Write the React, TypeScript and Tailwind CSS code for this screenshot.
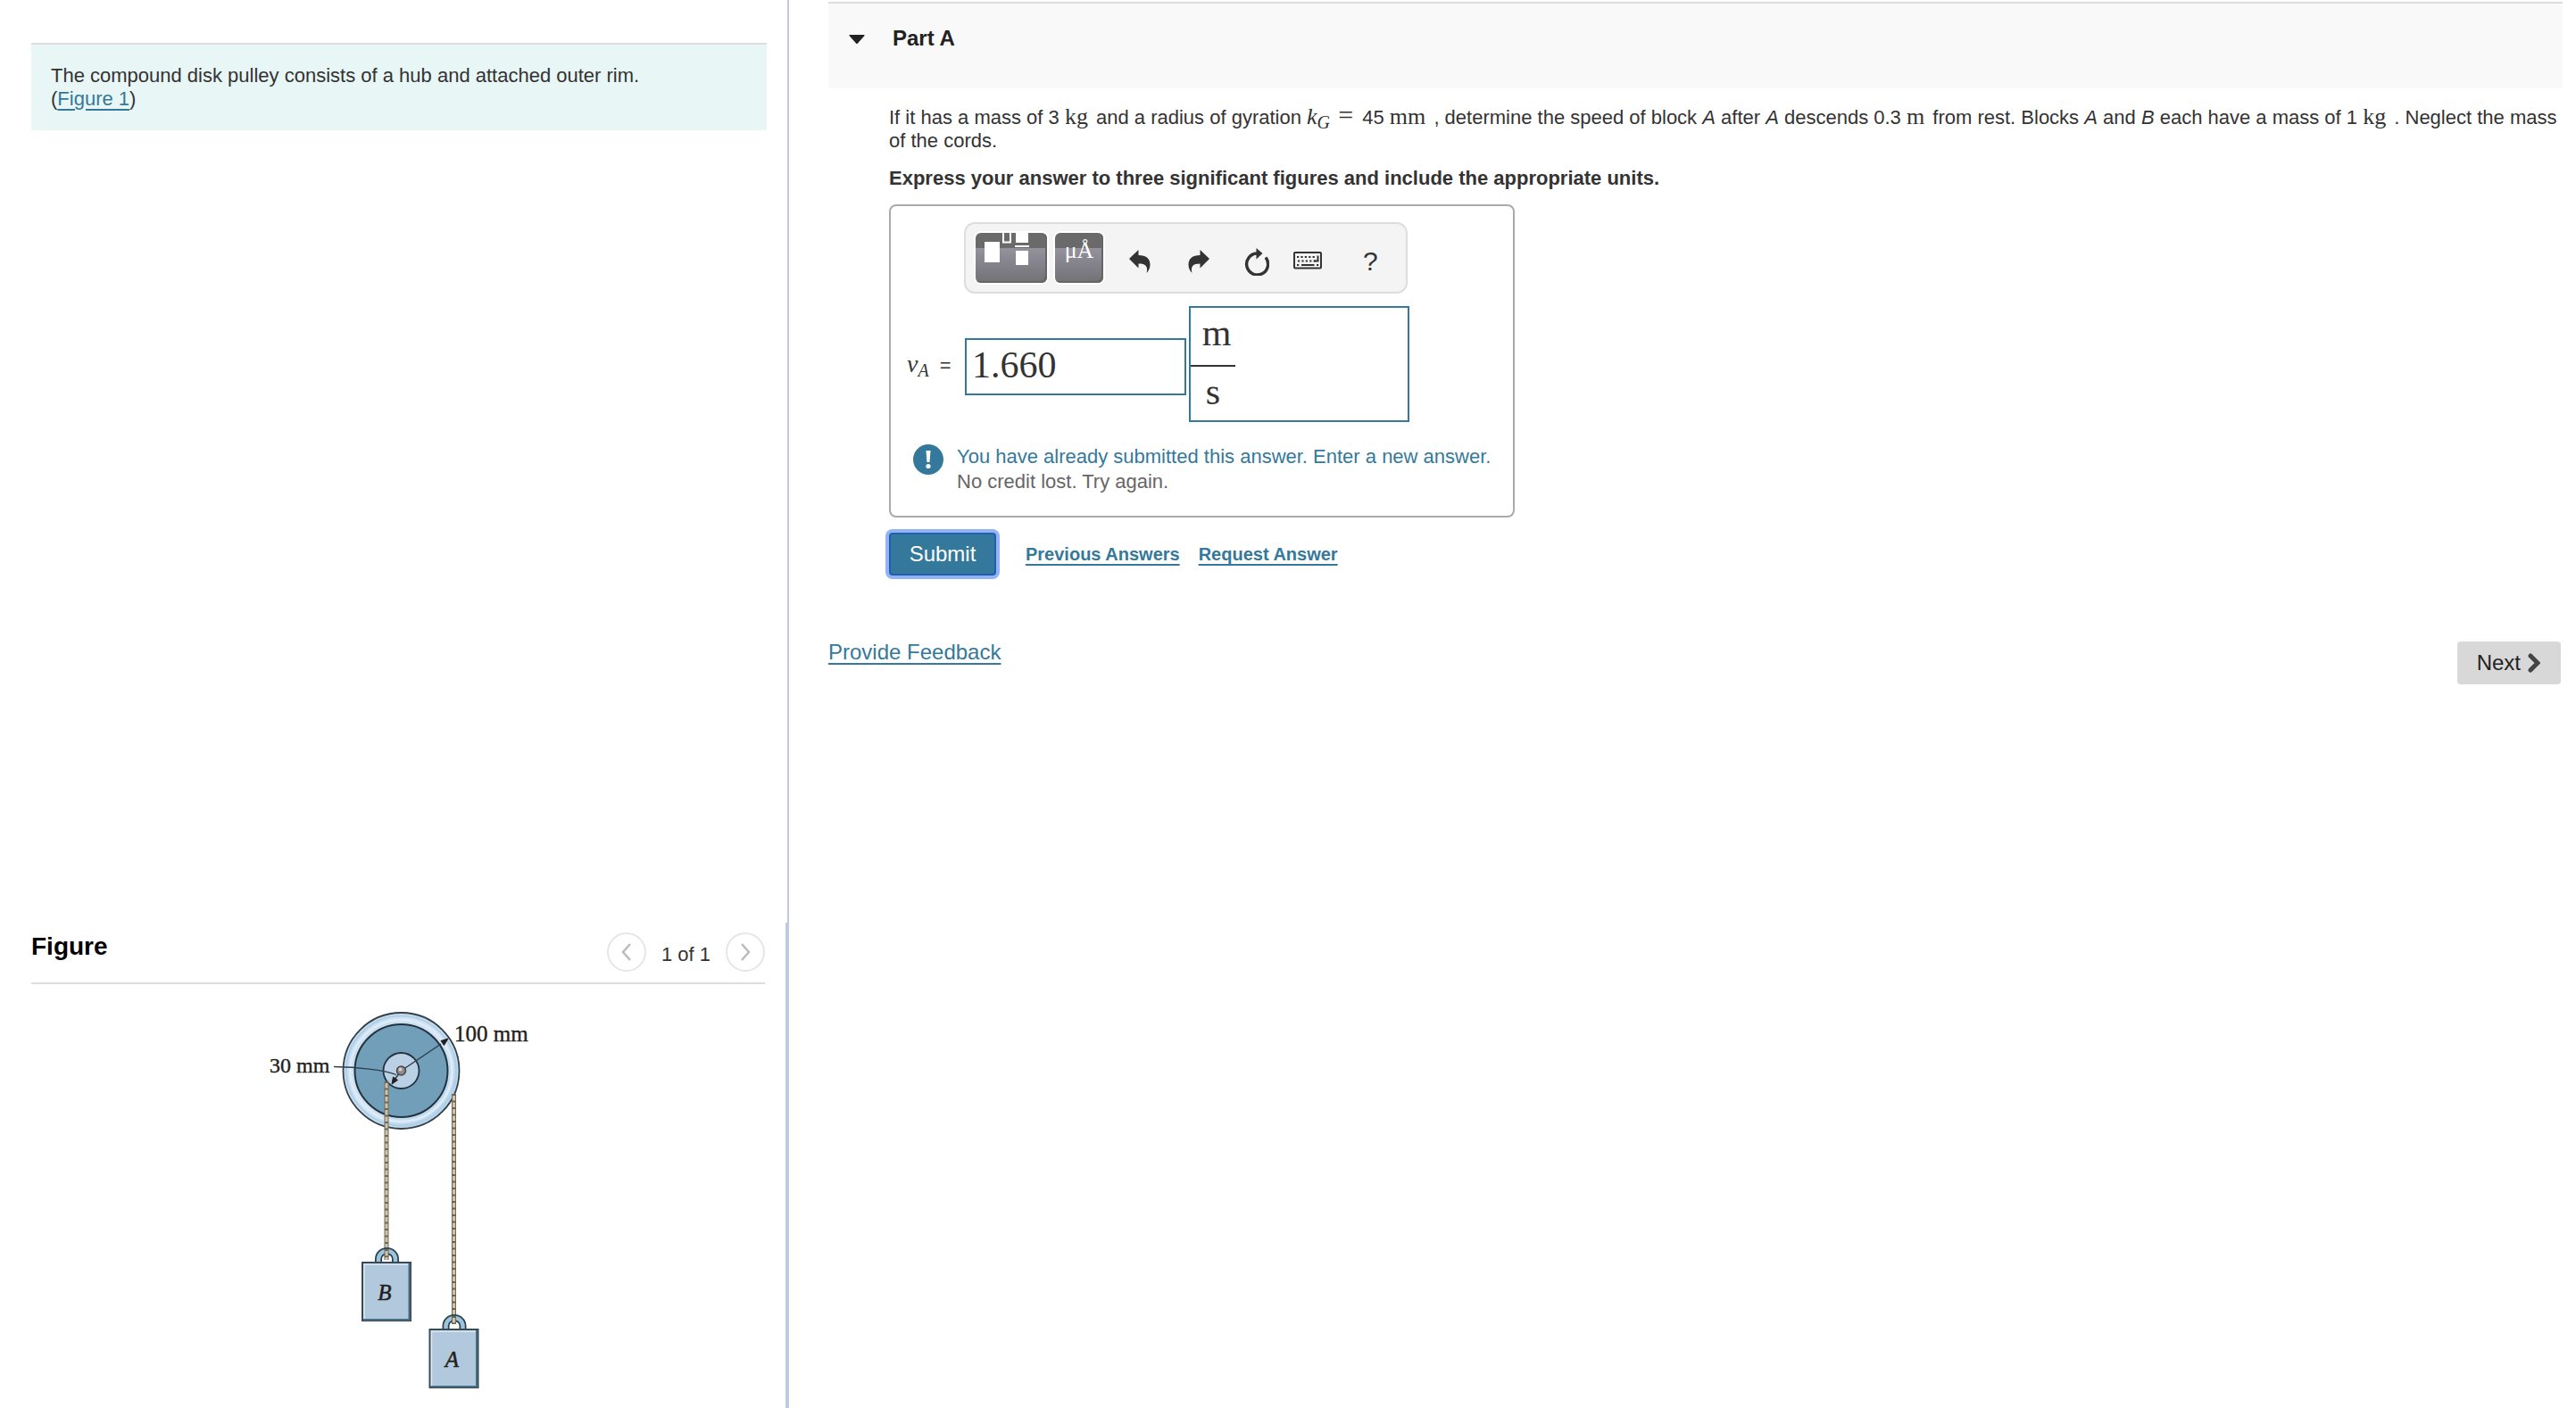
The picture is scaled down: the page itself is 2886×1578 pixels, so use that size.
import React from "react";

interface ChildrenProps {
  children: React.ReactNode;
}

interface IconButtonProps extends ChildrenProps {
  label: string;
  className?: string;
}

interface BlockProps {
  x: number;
  y: number;
  name: string;
}

interface RopeProps {
  x: number;
  top: number;
  bottom: number;
}

const Unit = ({ children }: ChildrenProps) => (
  <span className="mr-[3px] font-['Liberation_Serif',serif] text-[26px] leading-5">
    {children}
  </span>
);

const IconButton = ({ label, className = "", children }: IconButtonProps) => (
  <button
    type="button"
    aria-label={label}
    className={`flex items-center justify-center text-[#333] ${className}`}
  >
    {children}
  </button>
);

const TemplateIcon = () => (
  <svg width="80" height="56" viewBox="0 0 80 56" fill="#fff">
    <rect x="10" y="10" width="17" height="23" />
    <path d="M31 0V10.500H39V0" fill="none" stroke="#fff" strokeWidth="2" />
    <rect x="45" y="0" width="14" height="11" />
    <rect x="44" y="14" width="16" height="2" />
    <rect x="45" y="20" width="14" height="16" />
  </svg>
);

const CurvedArrow = ({ flip }: { flip?: boolean }) => (
  <svg
    width="24"
    height="26"
    viewBox="0 0 24 26"
    fill="currentColor"
    className={flip ? "-scale-x-100" : ""}
  >
    <path d="M0 10 10.500 0V6C19 6 23.500 10 23.500 16.500C23.500 20.500 22 23.500 19.500 26C21.500 18.500 18.500 15.500 10.500 15.500V20.500Z" />
  </svg>
);

const ResetIcon = () => (
  <svg width="28" height="31" viewBox="0 0 28 31">
    <path
      d="M24 10.500A12 12 0 1 1 14 6"
      fill="none"
      stroke="currentColor"
      strokeWidth="3.400"
    />
    <path d="M13.500 0 20.500 6 13.500 12.500Z" fill="currentColor" />
  </svg>
);

const KeyboardIcon = () => (
  <svg width="32" height="20" viewBox="0 0 32 20">
    <rect x="1" y="1" width="30" height="17.500" rx="1" fill="none" stroke="currentColor" strokeWidth="2" />
    <path
      d="M4 6H26M5 10.500H25M4 15H6.500M26 15H28.500"
      fill="none"
      stroke="currentColor"
      strokeWidth="2"
      strokeDasharray="2.200 2.200"
    />
    <path d="M27.500 4.500V10.500H23M9 15H23.500" fill="none" stroke="currentColor" strokeWidth="2" />
  </svg>
);

const Rope = ({ x, top, bottom }: RopeProps) => (
  <g fill="none">
    <path d={`M${x} ${top}V${bottom}`} stroke="#6f685a" strokeWidth="5" />
    <path d={`M${x} ${top}V${bottom}`} stroke="#cfc4a8" strokeWidth="3" />
    <path
      d={`M${x} ${top}V${bottom}`}
      stroke="#6b6250"
      strokeWidth="3.500"
      strokeDasharray="2 5.500"
    />
  </g>
);

const Block = ({ x, y, name }: BlockProps) => (
  <g>
    <path d={`M${x + 19} ${y}V${y - 3}A9.500 9 0 0 1 ${x + 38} ${y - 3}V${y}`} fill="none" stroke="#28404f" strokeWidth="8" />
    <path d={`M${x + 19} ${y}V${y - 3}A9.500 9 0 0 1 ${x + 38} ${y - 3}V${y}`} fill="none" stroke="#9dc3dd" strokeWidth="4.500" />
    <rect x={x + 1} y={y + 1} width="54" height="65" fill="#b2c8dc" stroke="#3c4a55" strokeWidth="2" />
    <path d={`M${x + 3} ${y + 65}V${y + 3}H${x + 53}`} fill="none" stroke="#d7e8f4" strokeWidth="1.500" />
    <path d={`M${x + 53.5} ${y + 2}V${y + 65}H${x + 2}`} fill="none" stroke="#456d85" strokeWidth="2" />
    <text x={x + 26} y={y + 43} textAnchor="middle" fontStyle="italic" fontSize="25" stroke="#231f20" strokeWidth="0.500">
      {name}
    </text>
  </g>
);

const PulleyFigure = () => (
  <svg
    width="300"
    height="446"
    viewBox="0 0 300 446"
    role="img"
    aria-label="Compound disk pulley with blocks A and B"
    className="ml-[265px] font-['Liberation_Serif',serif]"
    fill="#231f20"
  >
    <defs>
      <linearGradient id="rim" x1="0" y1="0" x2="1" y2="1">
        <stop offset="0" stopColor="#c3dcef" />
        <stop offset="0.500" stopColor="#cfe3f3" />
        <stop offset="1" stopColor="#b4d2e8" />
      </linearGradient>
    </defs>
    <circle cx="149.500" cy="80" r="65" fill="url(#rim)" stroke="#333f49" strokeWidth="1.800" />
    <circle cx="149.500" cy="80" r="61.500" fill="none" stroke="#b0cfe6" strokeWidth="2" />
    <circle cx="149.500" cy="80" r="57" fill="none" stroke="#dcebf7" strokeWidth="3" />
    <circle cx="149.500" cy="80" r="52" fill="#719fba" stroke="#24323d" strokeWidth="2" />
    <circle cx="149.500" cy="80" r="20" fill="#b9d0e5" stroke="#24323d" strokeWidth="1.800" />
    <Rope x={133} top={92} bottom={292} />
    <Rope x={208.5} top={106} bottom={364} />
    <path d="M149.500 80 194 50" stroke="#2c3f4b" strokeWidth="1.500" />
    <path d="M202 44 197.500 51.500 194 46.500Z" stroke="#231f20" />
    <path d="M74 75.500C100 76 130 79 144 84.500" fill="none" stroke="#2c3f4b" strokeWidth="1.300" />
    <path d="M149.500 80 142 90" stroke="#2c3f4b" strokeWidth="1.500" />
    <path d="M139 95 140.500 87 145.500 90.500Z" stroke="#231f20" />
    <circle cx="149.500" cy="80" r="5" fill="#8e8a89" stroke="#4a4544" strokeWidth="1.500" />
    <circle cx="148.500" cy="78.500" r="2" fill="#d3d0ce" />
    <Block x={105} y={294} name="B" />
    <Block x={180.5} y={369} name="A" />
    <Rope x={133} top={280} bottom={289} />
    <Rope x={208.5} top={355} bottom={364} />
    <text x="2" y="82" fontSize="24" stroke="#231f20" strokeWidth="0.400">30 mm</text>
    <text x="209" y="47" fontSize="25" stroke="#231f20" strokeWidth="0.400">100 mm</text>
  </svg>
);

const Pager = () => (
  <div className="mb-1 flex items-center">
    <button type="button" aria-label="Previous figure" className="flex size-11 items-center justify-center rounded-full border-2 border-[#e6e6e6] text-[#bbb]">
      <svg width="12" height="20" viewBox="0 0 12 20" fill="none" stroke="currentColor" strokeWidth="2.500">
        <path d="M10 1 2 10 10 19" />
      </svg>
    </button>
    <span className="mx-[17px] pt-1 text-[22px] text-[#333]">1 of 1</span>
    <button type="button" aria-label="Next figure" className="flex size-11 items-center justify-center rounded-full border-2 border-[#e6e6e6] text-[#bbb]">
      <svg width="12" height="20" viewBox="0 0 12 20" fill="none" stroke="currentColor" strokeWidth="2.500">
        <path d="M2 1 10 10 2 19" />
      </svg>
    </button>
  </div>
);

const Sidebar = () => (
  <aside className="flex flex-col">
    <div className="flex-1 border-r-2 border-[#c0cbdd] pt-12 pr-[23px] pl-[35px]">
      <div className="border-t-2 border-[#ddd] bg-[#e8f6f6] px-[22px] pt-[22px] pb-[22px] text-[22px] leading-[26px]">
        <p>The compound disk pulley consists of a hub and attached outer rim.</p>
        <p>
          (
          <a href="#figure" className="text-[#34799b] underline underline-offset-4">
            Figure 1
          </a>
          )
        </p>
      </div>
    </div>
    <section id="figure" className="border-r-4 border-[#c0cbdd] pr-[23px] pl-[35px]">
      <div className="flex h-[69px] items-end justify-between border-b-2 border-[#ddd] pb-2">
        <h2 className="pb-3.5 text-[28px] leading-9 font-bold text-black">Figure</h2>
        <Pager />
      </div>
      <div className="h-[475px] overflow-hidden pt-[17px]">
        <PulleyFigure />
      </div>
    </section>
  </aside>
);

const Toolbar = () => (
  <div className="ml-[82px] flex h-20 w-[497px] items-center rounded-xl border-2 border-[#ddd] bg-[#f4f4f4] pl-[11px]">
    <button
      type="button"
      aria-label="Templates"
      className="h-14 w-20 overflow-hidden rounded-md bg-linear-to-b from-[#6a6a6a] from-30% via-[#94929c] via-30% to-[#727176] shadow-[inset_-2px_-2px_0_#666,0_0_0_2px_#fff]"
    >
      <TemplateIcon />
    </button>
    <button
      type="button"
      aria-label="Symbols"
      className="ml-[9px] h-14 w-[54px] overflow-hidden rounded-md bg-linear-to-b from-[#6a6a6a] from-30% via-[#94929c] via-30% to-[#727176] pb-4 text-center font-['Liberation_Serif',serif] text-[26px] leading-none text-white shadow-[inset_-2px_-2px_0_#666,0_0_0_2px_#fff]"
    >
      μÅ
    </button>
    <IconButton label="Undo" className="ml-[29px] pt-2">
      <CurvedArrow />
    </IconButton>
    <IconButton label="Redo" className="ml-[42px] pt-2">
      <CurvedArrow flip />
    </IconButton>
    <IconButton label="Reset" className="ml-[39px] pt-2">
      <ResetIcon />
    </IconButton>
    <IconButton label="Keyboard shortcuts" className="ml-[27px] pt-1.5">
      <KeyboardIcon />
    </IconButton>
    <IconButton label="Help" className="ml-[46px] pt-2 font-['Liberation_Sans',sans-serif] text-[30px] leading-8">
      ?
    </IconButton>
  </div>
);

const AnswerBox = () => (
  <div className="mt-4 w-[701px] rounded-lg border-2 border-[#aaa] pt-[18px] pb-6">
    <Toolbar />
    <div className="mt-[14px] flex items-center">
      <label htmlFor="value" className="w-[83px] pt-0.5 pl-[18px] text-[22px]">
        <i className="font-['Liberation_Serif',serif] text-[28px] leading-none">v</i>
        <sub className="mr-3 font-['Liberation_Serif',serif] text-[20px] italic">A</sub>
        =
      </label>
      <input
        id="value"
        type="text"
        defaultValue="1.660"
        className="mt-1.5 h-16 w-[248px] border-2 border-[#34799b] px-1.5 pb-1 font-['Liberation_Serif',serif] text-[42px] leading-none outline-none"
      />
      <div
        role="textbox"
        aria-label="Units"
        tabIndex={0}
        className="ml-[3px] h-[130px] w-[247px] border-2 border-[#34799b] pt-1 font-['Liberation_Serif',serif] text-[42px]"
      >
        <span className="flex w-[50px] flex-col text-center">
          <span className="border-b-2 border-[#333] pb-3 pl-2 leading-[48px]">m</span>
          <span className="leading-[56px]">s</span>
        </span>
      </div>
    </div>
    <div className="mt-[25px] flex items-start pl-[25px]">
      <svg width="34" height="34" viewBox="0 0 34 34" className="mr-[15px]">
        <circle cx="17" cy="17" r="17" fill="#34799b" />
        <path d="M14.500 7H19.500L18.500 20H15.500Z" fill="#fff" />
        <circle cx="17" cy="24.500" r="2.600" fill="#fff" />
      </svg>
      <div className="text-[22px] leading-7">
        <p className="text-[#34799b]">You have already submitted this answer. Enter a new answer.</p>
        <p className="text-[#666]">No credit lost. Try again.</p>
      </div>
    </div>
  </div>
);

const PartA = () => (
  <section>
    <header className="flex h-[97px] items-start border-t-2 border-[#ddd] bg-[#f9f9f9] pt-[25px] pl-[23px] text-[#222]">
      <svg width="18" height="10" viewBox="0 0 18 10" fill="currentColor" className="mt-[10px]">
        <path d="M1 0H17Q18 0 17.500 1L10 9.500Q9 10.500 8 9.500L0.500 1Q0 0 1 0Z" />
      </svg>
      <h2 className="ml-[31px] text-2xl leading-7 font-bold">Part A</h2>
    </header>
    <div className="pt-5 pl-[68px]">
      <p className="text-[22px] leading-[26px]">
        If it has a mass of 3 <Unit>kg</Unit> and a radius of gyration{" "}
        <Unit>
          <i>k</i>
          <sub className="text-[20px] italic">G</sub>
        </Unit>{" "}
        <span className="mr-1 font-['Liberation_Serif',serif] text-[30px] leading-4">=</span> 45{" "}
        <Unit>mm</Unit> , determine the speed of block <i>A</i> after <i>A</i> descends
        0.3 <Unit>m</Unit> from rest. Blocks <i>A</i> and <i>B</i> each have a mass of 1{" "}
        <Unit>kg</Unit> . Neglect the mass of the cords.
      </p>
      <p className="mt-4 text-[22px] leading-[26px] font-bold">
        Express your answer to three significant figures and include the appropriate units.
      </p>
      <AnswerBox />
      <div className="mt-[17px] flex items-center">
        <button
          type="button"
          className="h-12 w-[120px] rounded-sm border-2 border-[#1f5fae] bg-[#34799b] text-2xl text-white shadow-[0_0_0_4px_#92b3f5]"
        >
          Submit
        </button>
        <a href="#previous" className="ml-[33px] text-xl font-bold text-[#34799b] underline underline-offset-4">
          Previous Answers
        </a>
        <a href="#request" className="ml-[21px] text-xl font-bold text-[#34799b] underline underline-offset-4">
          Request Answer
        </a>
      </div>
    </div>
  </section>
);

export default function App() {
  return (
    <div className="grid min-h-screen grid-cols-[442fr_1001fr] bg-white font-['Liberation_Sans',Arial,sans-serif] text-[#333]">
      <Sidebar />
      <main className="pt-0.5 pr-[15px] pl-11">
        <PartA />
        <div className="mt-[70px] flex items-start justify-between">
          <a href="#feedback" className="text-2xl leading-8 text-[#34799b] underline underline-offset-4">
            Provide Feedback
          </a>
          <button
            type="button"
            className="mt-1 mr-0.5 flex h-12 items-center gap-2 rounded-sm bg-[#d8d8d8] pr-[23px] pl-[22px] text-2xl text-[#222]"
          >
            Next
            <svg width="14" height="22" viewBox="0 0 14 22" fill="none" stroke="#444" strokeWidth="5" strokeLinecap="round">
              <path d="M3 3 11 11 3 19" />
            </svg>
          </button>
        </div>
      </main>
    </div>
  );
}
